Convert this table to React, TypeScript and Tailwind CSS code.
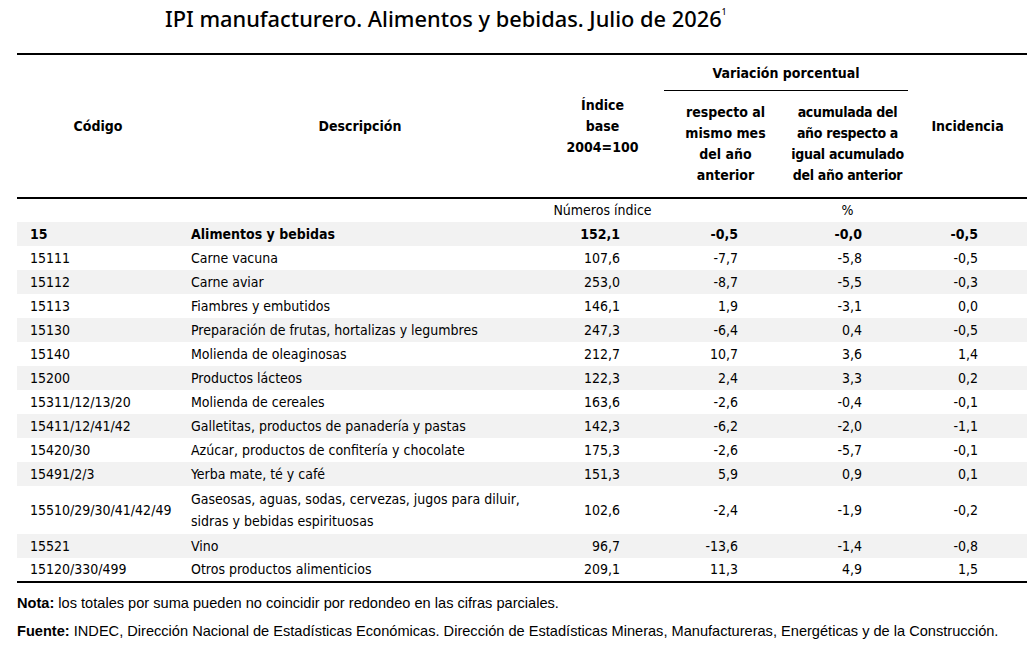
const rows = [
  { code: "15", desc: "Alimentos y bebidas", idx: "152,1", v1: "-0,5", v2: "-0,0", inc: "-0,5", bold: true },
  { code: "15111", desc: "Carne vacuna", idx: "107,6", v1: "-7,7", v2: "-5,8", inc: "-0,5" },
  { code: "15112", desc: "Carne aviar", idx: "253,0", v1: "-8,7", v2: "-5,5", inc: "-0,3" },
  { code: "15113", desc: "Fiambres y embutidos", idx: "146,1", v1: "1,9", v2: "-3,1", inc: "0,0" },
  { code: "15130", desc: "Preparación de frutas, hortalizas y legumbres", idx: "247,3", v1: "-6,4", v2: "0,4", inc: "-0,5" },
  { code: "15140", desc: "Molienda de oleaginosas", idx: "212,7", v1: "10,7", v2: "3,6", inc: "1,4" },
  { code: "15200", desc: "Productos lácteos", idx: "122,3", v1: "2,4", v2: "3,3", inc: "0,2" },
  { code: "15311/12/13/20", desc: "Molienda de cereales", idx: "163,6", v1: "-2,6", v2: "-0,4", inc: "-0,1" },
  { code: "15411/12/41/42", desc: "Galletitas, productos de panadería y pastas", idx: "142,3", v1: "-6,2", v2: "-2,0", inc: "-1,1" },
  { code: "15420/30", desc: "Azúcar, productos de confitería y chocolate", idx: "175,3", v1: "-2,6", v2: "-5,7", inc: "-0,1" },
  { code: "15491/2/3", desc: "Yerba mate, té y café", idx: "151,3", v1: "5,9", v2: "0,9", inc: "0,1" },
  { code: "15510/29/30/41/42/49", desc: "Gaseosas, aguas, sodas, cervezas, jugos para diluir, sidras y bebidas espirituosas", idx: "102,6", v1: "-2,4", v2: "-1,9", inc: "-0,2", tall: true },
  { code: "15521", desc: "Vino", idx: "96,7", v1: "-13,6", v2: "-1,4", inc: "-0,8" },
  { code: "15120/330/499", desc: "Otros productos alimenticios", idx: "209,1", v1: "11,3", v2: "4,9", inc: "1,5" },
];

const narrow = "font-['DejaVu_Sans_Condensed','Arial_Narrow',sans-serif]";

export default function App() {
  return (
    <div className="w-[1027px] h-[645px] bg-white text-black overflow-hidden">
      <h1 className="pl-[165px] pt-[3px] h-[53px] text-[21.8px] font-medium font-['Noto_Sans',sans-serif] whitespace-nowrap">
        IPI manufacturero. Alimentos y bebidas. Julio de 2026<sup className="text-[8px] align-super">1</sup>
      </h1>

      <table className={`ml-[17px] w-[1010px] border-collapse table-fixed text-[14px] ${narrow}`}>
        <colgroup>
          <col className="w-[162px]" />
          <col className="w-[362px]" />
          <col className="w-[123px]" />
          <col className="w-[123px]" />
          <col className="w-[121px]" />
          <col className="w-[119px]" />
        </colgroup>
        <thead className="font-bold leading-[21px]">
          <tr className="border-t-2 border-black h-[37px]">
            <th rowSpan={2} className="text-center font-bold">Código</th>
            <th rowSpan={2} className="text-center font-bold">Descripción</th>
            <th rowSpan={2} className="text-center font-bold">Índice<br />base<br />2004=100</th>
            <th colSpan={2} className="text-center font-bold relative">
              Variación porcentual
              <div className="absolute left-0 right-0 bottom-0 h-px bg-black" />
            </th>
            <th rowSpan={2} className="text-center font-bold">Incidencia</th>
          </tr>
          <tr className="h-[107px]">
            <th className="text-center font-bold whitespace-nowrap">respecto al<br />mismo mes<br />del año<br />anterior</th>
            <th className="text-center font-bold whitespace-nowrap tracking-[-0.3px]">acumulada del<br />año respecto a<br />igual acumulado<br />del año anterior</th>
          </tr>
        </thead>
        <tbody>
          <tr className="border-t-2 border-black h-[24px]">
            <td />
            <td />
            <td className="text-center">Números índice</td>
            <td />
            <td className="text-center">%</td>
            <td />
          </tr>
          {rows.map((r, i) => (
            <tr
              key={r.code}
              className={`${r.tall ? "h-[48px] leading-[22px]" : "h-[24px]"} ${i % 2 === 0 ? "bg-[#f2f2f2]" : "bg-white"} ${r.bold ? "font-bold" : ""}`}
            >
              <td className="pl-[13px] whitespace-nowrap">{r.code}</td>
              <td className="pl-[12px]">
                {r.tall ? (
                  <>Gaseosas, aguas, sodas, cervezas, jugos para diluir,<br />sidras y bebidas espirituosas</>
                ) : r.desc}
              </td>
              <td className="text-right pr-[44px]">{r.idx}</td>
              <td className="text-right pr-[49px]">{r.v1}</td>
              <td className="text-right pr-[46px]">{r.v2}</td>
              <td className="text-right pr-[49px]">{r.inc}</td>
            </tr>
          ))}
          <tr className="border-t-2 border-black">
            <td colSpan={6} />
          </tr>
        </tbody>
      </table>

      <div className="pl-[17px] pt-[10px] text-[14.6px] font-['Liberation_Sans',Arial,sans-serif] whitespace-nowrap">
        <p className="h-[28px]"><span className="font-bold">Nota:</span> los totales por suma pueden no coincidir por redondeo en las cifras parciales.</p>
        <p><span className="font-bold">Fuente:</span> INDEC, Dirección Nacional de Estadísticas Económicas. Dirección de Estadísticas Mineras, Manufactureras, Energéticas y de la Construcción.</p>
      </div>
    </div>
  );
}
